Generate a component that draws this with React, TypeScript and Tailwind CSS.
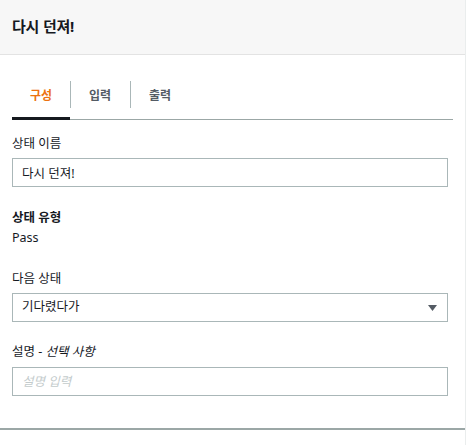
import { useState } from 'react';

const font = { fontFamily: '"Noto Sans", "Noto Sans CJK KR", sans-serif' };

export default function App() {
  const [tab, setTab] = useState('구성');
  const tabs = ['구성', '입력', '출력'];

  return (
    <div className="w-[470px] h-[445px] bg-white overflow-hidden" style={font}>
      <div className="w-[466px] h-full border-r border-[#eaeded] flex flex-col">
        {/* Header */}
        <div className="h-[55px] shrink-0 bg-[#f7f7f7] border-b border-[#e3e3e3] px-3 flex items-center">
          <h1 className="text-[15px] font-bold text-[#16191f] tracking-[-0.2px] -mt-[2px]">다시 던져!</h1>
        </div>

        <div className="flex flex-col">
          <div className="mx-3 mt-[26px] flex border-b border-[#9ba7a6]">
            {tabs.map((t, i) => (
              <button
                key={t}
                onClick={() => setTab(t)}
                className={`relative h-[38px] flex items-center ${i === 0 ? 'w-[58px]' : 'w-[60px]'} justify-center text-[12px] font-bold ${
                  tab === t ? 'text-[#ec7211]' : 'text-[#545b64]'
                }`}
              >
                {i > 0 && <span className="absolute left-0 top-0 h-[27px] w-px bg-[#aab7b8]" />}
                <span className="-mt-[9px]">{t}</span>
                {tab === t && <span className="absolute left-0 right-0 -bottom-px h-[3px] bg-[#16191f]" />}
              </button>
            ))}
          </div>

          <div className="px-3 pt-[15px] flex flex-col">
            <label className="text-[12.5px] text-[#16191f] leading-[18px]">상태 이름</label>
            <input
              defaultValue="다시 던져!"
              className="mt-[5px] h-[29px] w-[436px] border border-[#aab7b8] px-[9px] text-[12.5px] text-[#16191f] outline-none"
              style={font}
            />

            <div className="mt-[22px] text-[12.5px] font-semibold text-[#16191f] leading-[18px]">상태 유형</div>
            <div className="mt-[2px] text-[12.5px] text-[#16191f] leading-[18px]">Pass</div>

            <label className="mt-[23px] text-[12.5px] text-[#16191f] leading-[18px]">다음 상태</label>
            <div className="mt-[5px] h-[29px] w-[436px] border border-[#aab7b8] px-[9px] flex items-center justify-between text-[12.5px] text-[#16191f]">
              <span>기다렸다가</span>
              <svg width="9" height="6" viewBox="0 0 9 6" className="mr-[1px]">
                <polygon points="0,0 9,0 4.5,6" fill="#545b64" />
              </svg>
            </div>

            <label className="mt-[21px] text-[12.5px] text-[#16191f] leading-[18px]">
              설명 - <i>선택 사항</i>
            </label>
            <input
              placeholder="설명 입력"
              className="mt-[6px] h-[29px] w-[436px] border border-[#aab7b8] px-[9px] text-[12.5px] text-[#16191f] italic placeholder:text-[#c3cbcc] outline-none"
              style={font}
            />
          </div>

          <div className="mt-[32px] h-[2px] bg-[#9ba7a6]" />
        </div>
      </div>
    </div>
  );
}
